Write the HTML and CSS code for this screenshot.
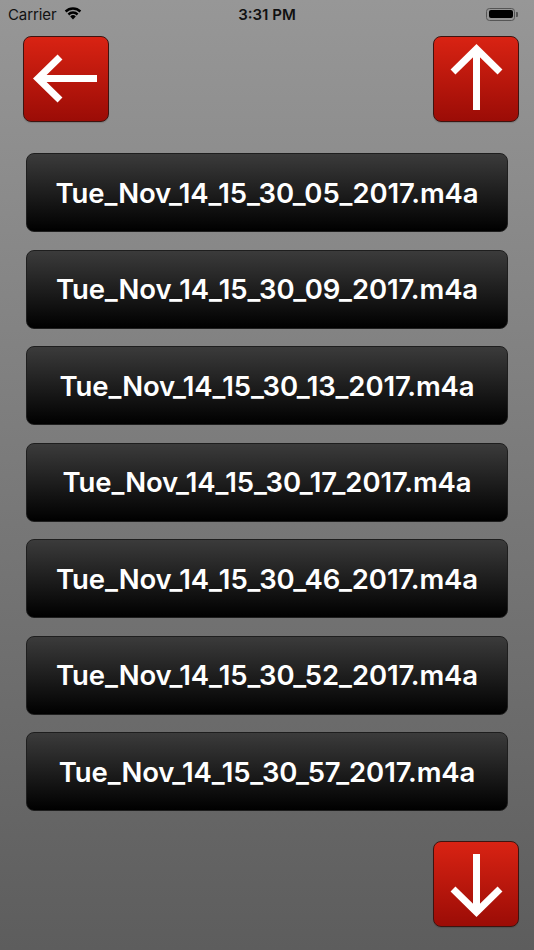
FILE: index.html
```html
<!DOCTYPE html>
<html lang="en">
<head>
  <meta charset="UTF-8">
  <title>Recordings</title>
  <meta name="viewport" content="width=device-width, initial-scale=1">
  <link rel="stylesheet" href="styles.css">
</head>
<body>
  <div class="status-bar">
    <div class="status-left">
      <span>Carrier</span>
      <svg class="wifi" width="18" height="13" viewBox="0 0 18 13">
        <path d="M9 12.5 L6.2 9.4 A4 4 0 0 1 11.8 9.4 Z" fill="#000"/>
        <path d="M3.6 6.6 A7.6 7.6 0 0 1 14.4 6.6 L12.8 8.4 A5.3 5.3 0 0 0 5.2 8.4 Z" fill="#000"/>
        <path d="M0.8 3.6 A11.6 11.6 0 0 1 17.2 3.6 L15.6 5.4 A9.3 9.3 0 0 0 2.4 5.4 Z" fill="#000"/>
      </svg>
    </div>
    <div class="status-time">3:31 PM</div>
    <div class="status-right">
      <div class="battery"><div class="battery-fill"></div></div>
      <div class="battery-cap"></div>
    </div>
  </div>

  <div class="top-row">
    <button class="red-btn" aria-label="Back">
      <svg width="86" height="86" viewBox="0 0 86 86">
        <path d="M37 21 L15 42.5 L37 64 M15 42.5 L74 42.5" stroke="#fff" stroke-width="7" fill="none" stroke-linejoin="miter" stroke-miterlimit="4"/>
      </svg>
    </button>
    <button class="red-btn" aria-label="Up">
      <svg width="86" height="86" viewBox="0 0 86 86">
        <path d="M20 36 L43.5 13 L67 36 M43.5 13 L43.5 74" stroke="#fff" stroke-width="7" fill="none" stroke-linejoin="miter" stroke-miterlimit="4"/>
      </svg>
    </button>
  </div>

  <div class="file-list">
    <button class="file-btn">Tue_Nov_14_15_30_05_2017.m4a</button>
    <button class="file-btn">Tue_Nov_14_15_30_09_2017.m4a</button>
    <button class="file-btn">Tue_Nov_14_15_30_13_2017.m4a</button>
    <button class="file-btn">Tue_Nov_14_15_30_17_2017.m4a</button>
    <button class="file-btn">Tue_Nov_14_15_30_46_2017.m4a</button>
    <button class="file-btn">Tue_Nov_14_15_30_52_2017.m4a</button>
    <button class="file-btn">Tue_Nov_14_15_30_57_2017.m4a</button>
  </div>

  <div class="bottom-row">
    <button class="red-btn" aria-label="Down">
      <svg width="86" height="86" viewBox="0 0 86 86">
        <path d="M20 48 L43.5 71 L67 48 M43.5 71 L43.5 13" stroke="#fff" stroke-width="7" fill="none" stroke-linejoin="miter" stroke-miterlimit="4"/>
      </svg>
    </button>
  </div>
</body>
</html>
```

FILE: styles.css
```css
* {
  box-sizing: border-box;
}
html, body {
  margin: 0;
  padding: 0;
}
body {
  width: 534px;
  height: 950px;
  overflow: hidden;
  font-family: "Inter", "Roboto", sans-serif;
  background: linear-gradient(to bottom, #979797, #5d5d5d);
}
.status-bar {
  height: 28px;
  display: flex;
  align-items: center;
  justify-content: space-between;
  padding: 0 16px 0 8px;
  font-size: 15px;
  color: #111;
  position: relative;
}
.status-left {
  display: flex;
  align-items: center;
  gap: 8px;
  letter-spacing: -0.1px;
}
.wifi {
  margin-top: -2px;
}
.status-time {
  position: absolute;
  left: 0;
  right: 0;
  text-align: center;
  font-weight: 600;
  pointer-events: none;
}
.status-right {
  display: flex;
  align-items: center;
}
.battery {
  width: 29px;
  height: 13px;
  border: 1px solid #555;
  border-radius: 3.5px;
  padding: 1.5px;
}
.battery-fill {
  width: 100%;
  height: 100%;
  background: #000;
  border-radius: 2px;
}
.battery-cap {
  width: 2px;
  height: 5px;
  background: #555;
  border-radius: 0 1px 1px 0;
  margin-left: 1px;
}
.top-row {
  display: flex;
  justify-content: space-between;
  padding: 0 15px 0 23px;
  margin-top: 8px;
}
.red-btn {
  width: 86px;
  height: 86px;
  padding: 0;
  border: 1px solid #3e1410;
  border-radius: 8px;
  background: linear-gradient(to bottom, #d92313, #9b0c06);
  display: flex;
  align-items: center;
  justify-content: center;
  box-shadow: 0 1px 1px rgba(0, 0, 0, 0.15);
}
.red-btn svg {
  display: block;
  flex: none;
}
.file-list {
  display: flex;
  flex-direction: column;
  gap: 17.5px;
  padding: 0 26px;
  margin-top: 31px;
}
.file-btn {
  height: 79px;
  width: 100%;
  border: 1px solid #1e1e1e;
  border-radius: 8px;
  background: linear-gradient(to bottom, #3b3b3b, #000);
  color: #fff;
  font-family: "Inter", "Roboto", sans-serif;
  font-size: 27.5px;
  font-weight: 600;
  letter-spacing: -0.1px;
  text-align: center;
  padding: 0;
}
.bottom-row {
  display: flex;
  justify-content: flex-end;
  padding: 0 15px;
  margin-top: 30px;
}
```
